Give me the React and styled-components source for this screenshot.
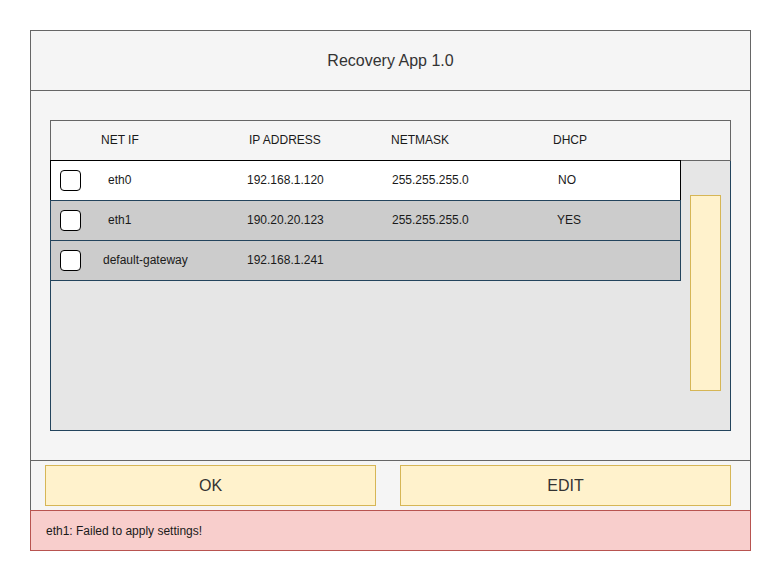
import React from "react";
import styled, { createGlobalStyle } from "styled-components";

const Global = createGlobalStyle`
  html, body { margin: 0; padding: 0; background: #ffffff; }
  body { font-family: "Liberation Sans", Arial, Helvetica, sans-serif; }
  * { box-sizing: border-box; }
`;

const Frame = styled.div`
  margin: 30px 0 0 30px;
  width: 721px;
  background: #f5f5f5;
  border: 1px solid #666666;
  display: flex;
  flex-direction: column;
`;

const TitleBar = styled.div`
  height: 60px;
  border-bottom: 1px solid #666666;
  display: flex;
  align-items: center;
  justify-content: center;
  font-size: 16px;
  color: #333333;
`;

const Content = styled.div`
  height: 370px;
  border-bottom: 1px solid #666666;
  padding: 29px 19px 29px 19px;
  display: flex;
  flex-direction: column;
`;

const Table = styled.div`
  display: flex;
  flex-direction: column;
  flex: 1;
`;

const columns = `44px 145px 145px 160px 1fr`;

const HeaderRow = styled.div`
  height: 41px;
  border: 1px solid #666666;
  background: #f5f5f5;
  display: grid;
  grid-template-columns: ${columns};
  align-items: center;
  padding-bottom: 2px;
  font-size: 12px;
  color: #1a1a1a;
`;

const Body = styled.div`
  height: 270px;
  border: 1px solid #23445d;
  border-top: none;
  background: #e6e6e6;
  display: flex;
  align-items: flex-start;
`;

const RowList = styled.div`
  width: 631px;
  margin: -1px 0 0 -1px;
  display: flex;
  flex-direction: column;
`;

const Row = styled.div`
  height: 41px;
  background: ${(p) => (p.$active ? "#ffffff" : "#cccccc")};
  border: 1px solid ${(p) => (p.$active ? "#000000" : "#23445d")};
  display: grid;
  grid-template-columns: ${columns};
  align-items: center;
  font-size: 12px;
  color: #1a1a1a;
  & + & {
    margin-top: -1px;
  }
`;

const Cell = styled.div`
  padding-left: ${(p) => p.$pad || 0}px;
  padding-bottom: ${(p) => (p.$raise ? 2 : 0)}px;
  white-space: nowrap;
`;

const Check = styled.div`
  width: 21px;
  height: 21px;
  margin-left: 9px;
  background: #ffffff;
  border: 1px solid #000000;
  border-radius: 4px;
`;

const Track = styled.div`
  flex: 1;
  padding: 34px 0 0 9px;
`;

const Thumb = styled.div`
  width: 31px;
  height: 196px;
  background: #fff2cc;
  border: 1px solid #d6b656;
`;

const ButtonBar = styled.div`
  display: flex;
  gap: 24px;
  padding: 4px 19px 4px 14px;
`;

const Button = styled.button`
  width: 331px;
  height: 41px;
  background: #fff2cc;
  border: 1px solid #d6b656;
  font-family: "Liberation Sans", Arial, Helvetica, sans-serif;
  font-size: 16px;
  color: #333333;
  padding: 0;
  cursor: pointer;
`;

const ErrorBar = styled.div`
  height: 41px;
  margin: 0 -1px -1px -1px;
  background: #f8cecc;
  border: 1px solid #b85450;
  display: flex;
  align-items: center;
  padding-left: 15px;
  font-size: 12px;
  color: #1a1a1a;
`;

const rows = [
  { name: "eth0", namePad: 13, ip: "192.168.1.120", mask: "255.255.255.0", dhcp: "NO", dhcpPad: 13, active: true },
  { name: "eth1", namePad: 13, ip: "190.20.20.123", mask: "255.255.255.0", dhcp: "YES", dhcpPad: 12 },
  { name: "default-gateway", namePad: 8, ip: "192.168.1.241", mask: "", dhcp: "" },
];

export default function App() {
  return (
    <>
      <Global />
      <Frame>
        <TitleBar>Recovery App 1.0</TitleBar>
        <Content>
          <Table>
            <HeaderRow>
              <Cell />
              <Cell $pad={6}>NET IF</Cell>
              <Cell $pad={9}>IP ADDRESS</Cell>
              <Cell $pad={6}>NETMASK</Cell>
              <Cell $pad={8}>DHCP</Cell>
            </HeaderRow>
            <Body>
              <RowList>
                {rows.map((r) => (
                  <Row key={r.name} $active={r.active}>
                    <Cell>
                      <Check />
                    </Cell>
                    <Cell $pad={r.namePad} $raise>{r.name}</Cell>
                    <Cell $pad={7} $raise>{r.ip}</Cell>
                    <Cell $pad={7} $raise>{r.mask}</Cell>
                    <Cell $pad={r.dhcpPad} $raise>{r.dhcp}</Cell>
                  </Row>
                ))}
              </RowList>
              <Track>
                <Thumb />
              </Track>
            </Body>
          </Table>
        </Content>
        <ButtonBar>
          <Button>OK</Button>
          <Button>EDIT</Button>
        </ButtonBar>
        <ErrorBar>eth1: Failed to apply settings!</ErrorBar>
      </Frame>
    </>
  );
}
